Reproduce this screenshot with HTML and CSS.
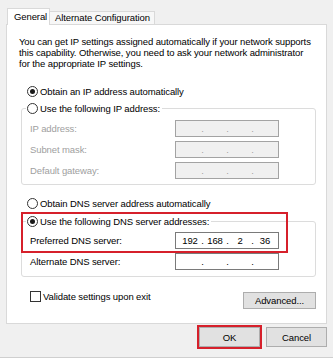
FILE: index.html
```html
<!DOCTYPE html>
<html>
<head>
<meta charset="utf-8">
<link rel="stylesheet" href="styles.css">
</head>
<body>
<div class="dialog">
  <div class="tabs">
    <div class="tab active">General</div>
    <div class="tab">Alternate Configuration</div>
  </div>
  <div class="panel">
    <p class="intro">You can get IP settings assigned automatically if your network supports<br>this capability. Otherwise, you need to ask your network administrator<br>for the appropriate IP settings.</p>

    <div class="option first"><span class="radio checked"></span><span>Obtain an IP address automatically</span></div>

    <fieldset class="group ip">
      <legend><span class="radio"></span><span>Use the following IP address:</span></legend>
      <div class="row disabled"><span class="label">IP address:</span><span class="field"><i></i><b>.</b><i></i><b>.</b><i></i><b>.</b><i></i></span></div>
      <div class="row disabled"><span class="label">Subnet mask:</span><span class="field"><i></i><b>.</b><i></i><b>.</b><i></i><b>.</b><i></i></span></div>
      <div class="row disabled"><span class="label">Default gateway:</span><span class="field"><i></i><b>.</b><i></i><b>.</b><i></i><b>.</b><i></i></span></div>
    </fieldset>

    <div class="option dns-auto"><span class="radio"></span><span>Obtain DNS server address automatically</span></div>

    <fieldset class="group dns">
      <legend><span class="radio checked"></span><span>Use the following DNS server addresses:</span></legend>
      <div class="row"><span class="label">Preferred DNS server:</span><span class="field"><i>192</i><b>.</b><i>168</i><b>.</b><i>2</i><b>.</b><i>36</i></span></div>
      <div class="row"><span class="label">Alternate DNS server:</span><span class="field"><i></i><b>.</b><i></i><b>.</b><i></i><b>.</b><i></i></span></div>
    </fieldset>

    <div class="bottom-row">
      <label class="check"><span class="box"></span><span>Validate settings upon exit</span></label>
      <button class="btn advanced">Advanced...</button>
    </div>

    <div class="highlight dns-highlight"></div>
  </div>
  <div class="footer">
    <button class="btn action ok">OK</button>
    <button class="btn action">Cancel</button>
  </div>
</div>
</body>
</html>
```

FILE: styles.css
```css
* { box-sizing: border-box; }
html, body { margin: 0; padding: 0; }
body {
  background: #f0f0f0;
  font-family: "Liberation Sans", Arial, sans-serif;
  font-size: 9.5px;
  letter-spacing: -0.1px;
  color: #000;
  width: 333px;
  height: 358px;
  overflow: hidden;
}
.dialog {
  padding: 8px 0 0 6px;
  height: 358px;
  border-bottom: 1px solid #cfcfcf;
}
.tabs {
  display: flex;
  align-items: flex-end;
  height: 17px;
  margin-left: 1px;
  margin-bottom: -1px;
  position: relative;
  z-index: 1;
}
.tab {
  height: 13px;
  line-height: 12px;
  margin-bottom: 1px;
  padding: 0 4px 0 5px;
  border: 1px solid #d9d9d9;
  border-bottom: none;
  background: #f7f7f7;
  white-space: nowrap;
  margin-left: -1px;
}
.tab.active {
  height: 17px;
  line-height: 15px;
  margin-bottom: 0;
  margin-left: 0;
  background: #fff;
  padding: 0 5px 0 6px;
  width: 43px;
}
.panel {
  position: relative;
  width: 321px;
  height: 300px;
  background: #fff;
  border: 1px solid #d9d9d9;
  padding-top: 11px;
}
.intro {
  margin: 0 0 0 12px;
  width: 305px;
  line-height: 11px;
  white-space: nowrap;
}
.option {
  display: flex;
  align-items: center;
  height: 14px;
  margin-left: 20px;
  gap: 2px;
}
.option.first { margin-top: 15px; }
.option.dns-auto { margin-top: 11px; }
.radio {
  display: inline-block;
  width: 11px;
  height: 11px;
  border: 1px solid #333;
  border-radius: 50%;
  background: #fff;
  position: relative;
  flex: none;
}
.radio.checked::after {
  content: "";
  position: absolute;
  left: 2px;
  top: 2px;
  width: 5px;
  height: 5px;
  border-radius: 50%;
  background: #1a1a1a;
}
.group {
  margin: 3px 10px 0 14px;
  padding: 0 0 5px 0;
  border: 1px solid #dcdcdc;
  border-radius: 3px;
  min-width: 0;
}
.group.dns { margin-top: 4px; padding-bottom: 6px; }
.group legend {
  display: flex;
  align-items: center;
  gap: 2px;
  height: 14px;
  margin-left: 4px;
  padding: 0 2px 0 1px;
}
.group.ip .row:first-of-type { margin-top: 5px; }
.group.dns .row:first-of-type { margin-top: 4px; }
.row {
  display: flex;
  align-items: center;
  height: 17px;
  padding-left: 8px;
  margin-top: 4px;
}
.label {
  width: 145px;
  flex: none;
}
.row.disabled .label { color: #a0a0a0; }
.field {
  display: flex;
  align-items: center;
  width: 104px;
  height: 17px;
  border: 1px solid #7a7a7a;
  background: #fff;
  padding-left: 3px;
}
.row.disabled .field {
  border-color: #a3a3a3;
  background: #f0f0f0;
  color: #a0a0a0;
}
.field i {
  font-style: normal;
  width: 22px;
  text-align: center;
}
.field b {
  font-weight: normal;
  width: 3px;
  text-align: center;
}
.bottom-row {
  display: flex;
  align-items: flex-start;
  justify-content: space-between;
  margin: 15px 10px 0 23px;
}
.check {
  display: flex;
  align-items: center;
  gap: 2px;
  height: 11px;
  margin-top: -1px;
}
.box {
  width: 11px;
  height: 11px;
  border: 1px solid #333;
  background: #fff;
}
.btn {
  font-family: inherit;
  font-size: 9.5px;
  letter-spacing: -0.1px;
  color: #000;
  background: #e1e1e1;
  border: 1px solid #adadad;
  padding: 0;
  margin: 0;
}
.advanced {
  width: 73px;
  height: 17px;
}
.footer {
  display: flex;
  justify-content: flex-end;
  gap: 6px;
  width: 321px;
  margin-top: 3px;
}
.action {
  width: 61px;
  height: 20px;
}
.ok {
  outline: 2px solid #d6202b;
  outline-offset: 0;
}
.highlight {
  position: absolute;
  border: 2px solid #d6202b;
  pointer-events: none;
}
.dns-highlight {
  left: 14px;
  top: 187px;
  width: 267px;
  height: 41px;
}
```
